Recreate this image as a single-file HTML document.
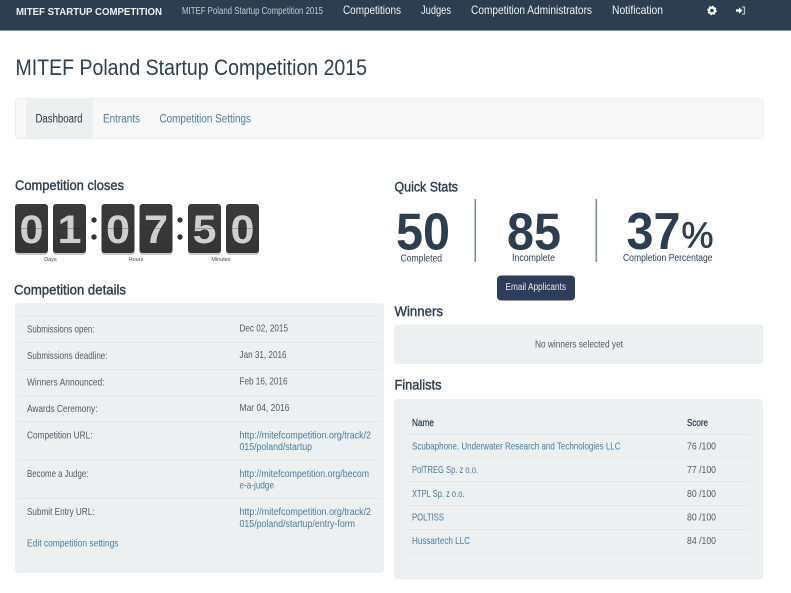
<!DOCTYPE html>
<html lang="en">
<head>
<meta charset="utf-8">
<title>MITEF Poland Startup Competition 2015</title>
<style>
html,body{margin:0;padding:0;background:#fff;width:791px;height:593px;overflow:hidden}
svg{display:block;filter:blur(.3px)}
text{font-family:"Liberation Sans",Arial,sans-serif;white-space:pre}
.nav{fill:#f0f2f4;font-size:12px}
.lab{fill:#505c68;font-size:10.500px}
.val{fill:#505c68;font-size:10.500px}
.lnk{fill:#4a7ba0;font-size:10.500px}
.h{fill:#2c3e50;font-size:14px;stroke:#2c3e50;stroke-width:.4}
.dig{fill:#cfcfcf;font-size:40px;font-weight:bold;text-anchor:middle}
.cl{fill:#444;font-size:5.500px;text-anchor:middle}
.big{fill:#2c3e50;font-size:52px;font-weight:bold}
.st{fill:#2c3e50;font-size:10px}
.ln{stroke:#e3e7e8;stroke-width:1}
</style>
</head>
<body>
<svg width="791" height="593" viewBox="0 0 791 593" xmlns="http://www.w3.org/2000/svg">
<defs>
<linearGradient id="c" x1="0" y1="0" x2="0" y2="1">
<stop offset="0" stop-color="#3a3a3a"/><stop offset="1" stop-color="#343434"/>
</linearGradient>
<g id="card"><rect x="0" y="1" width="33" height="50" rx="3" fill="#c9c9c9"/><rect x="0" y="0" width="33" height="49" rx="3" fill="url(#c)"/></g>
</defs>

<!-- nav -->
<rect width="791" height="30" fill="#2c3e50"/>
<rect y="30" width="791" height="1" fill="#8d99a4"/>
<text x="16" y="15" font-size="10" font-weight="bold" fill="#eef0f2" textLength="146" lengthAdjust="spacingAndGlyphs">MITEF STARTUP COMPETITION</text>
<text x="182" y="14" font-size="10" fill="#c3cbd2" textLength="141" lengthAdjust="spacingAndGlyphs">MITEF Poland Startup Competition 2015</text>
<text class="nav" x="343" y="14" textLength="58" lengthAdjust="spacingAndGlyphs">Competitions</text>
<text class="nav" x="421" y="14" textLength="30" lengthAdjust="spacingAndGlyphs">Judges</text>
<text class="nav" x="471" y="14" textLength="121" lengthAdjust="spacingAndGlyphs">Competition Administrators</text>
<text class="nav" x="612" y="14" textLength="51" lengthAdjust="spacingAndGlyphs">Notification</text>
<!-- gear -->
<circle cx="712" cy="10.500" r="2.900" fill="none" stroke="#fff" stroke-width="2.200"/>
<circle cx="712" cy="10.500" r="4.200" fill="none" stroke="#fff" stroke-width="1.200" stroke-dasharray="1.700 1.600"/>
<!-- sign in -->
<path d="M736 9.300h3V7.200l3.400 3.300-3.400 3.300v-2.100h-3z" fill="#fff"/>
<path d="M742 7h2.400v7H742" fill="none" stroke="#cfd6dc" stroke-width="1"/>

<!-- title -->
<text x="15.500" y="75" font-size="22" fill="#2c3e50" textLength="351.500" lengthAdjust="spacingAndGlyphs">MITEF Poland Startup Competition 2015</text>

<!-- tabs -->
<rect x="15.500" y="98.500" width="747.500" height="40" rx="3" fill="#f8f8f8" stroke="#eceeee"/>
<rect x="26" y="99" width="67" height="39" fill="#ecf0f1"/>
<text x="35.500" y="122.500" font-size="11.500" fill="#333" textLength="47" lengthAdjust="spacingAndGlyphs">Dashboard</text>
<text x="103" y="122.500" font-size="11.500" fill="#4a7ba0" textLength="37" lengthAdjust="spacingAndGlyphs">Entrants</text>
<text x="159.500" y="122.500" font-size="11.500" fill="#4a7ba0" textLength="91.500" lengthAdjust="spacingAndGlyphs">Competition Settings</text>

<!-- clock -->
<text class="h" x="15" y="190" textLength="109" lengthAdjust="spacingAndGlyphs">Competition closes</text>
<use href="#card" x="15" y="204"/><use href="#card" x="53" y="204"/>
<use href="#card" x="101.500" y="204"/><use href="#card" x="139.500" y="204"/>
<use href="#card" x="188" y="204"/><use href="#card" x="226" y="204"/>
<text class="dig" x="31.500" y="243" textLength="24" lengthAdjust="spacingAndGlyphs">0</text>
<text class="dig" x="69.500" y="243" textLength="24" lengthAdjust="spacingAndGlyphs">1</text>
<text class="dig" x="118" y="243" textLength="24" lengthAdjust="spacingAndGlyphs">0</text>
<text class="dig" x="156" y="243" textLength="24" lengthAdjust="spacingAndGlyphs">7</text>
<text class="dig" x="204.500" y="243" textLength="24" lengthAdjust="spacingAndGlyphs">5</text>
<text class="dig" x="242.500" y="243" textLength="24" lengthAdjust="spacingAndGlyphs">0</text>
<path d="M15 228.500h33M53 228.500h33M101.500 228.500h33M139.500 228.500h33M188 228.500h33M226 228.500h33" stroke="#222" stroke-width=".6" opacity=".55"/>
<circle cx="94" cy="220" r="2.700" fill="#333"/><circle cx="94" cy="237" r="2.700" fill="#333"/>
<circle cx="180" cy="220" r="2.700" fill="#333"/><circle cx="180" cy="237" r="2.700" fill="#333"/>
<text class="cl" x="50.500" y="261">Days</text>
<text class="cl" x="136" y="261">Hours</text>
<text class="cl" x="221" y="261">Minutes</text>

<!-- details -->
<text class="h" x="14" y="294.500" textLength="112" lengthAdjust="spacingAndGlyphs">Competition details</text>
<rect x="15" y="303" width="369" height="270" rx="3" fill="#ecf0f1"/>
<path class="ln" d="M17 316.500h364M17 342.500h364M17 369.500h364M17 395.500h364M17 421.500h364M17 459.500h364M17 498.500h364"/>
<text class="lab" x="27" y="332.500" textLength="67.500" lengthAdjust="spacingAndGlyphs">Submissions open:</text>
<text class="lab" x="27" y="359" textLength="80.500" lengthAdjust="spacingAndGlyphs">Submissions deadline:</text>
<text class="lab" x="27" y="385.500" textLength="77.500" lengthAdjust="spacingAndGlyphs">Winners Announced:</text>
<text class="lab" x="27" y="412" textLength="70.500" lengthAdjust="spacingAndGlyphs">Awards Ceremony:</text>
<text class="lab" x="27" y="438.500" textLength="65.500" lengthAdjust="spacingAndGlyphs">Competition URL:</text>
<text class="lab" x="27" y="477" textLength="61.500" lengthAdjust="spacingAndGlyphs">Become a Judge:</text>
<text class="lab" x="27" y="515" textLength="67.500" lengthAdjust="spacingAndGlyphs">Submit Entry URL:</text>
<text class="lnk" x="27" y="546.500" textLength="91.500" lengthAdjust="spacingAndGlyphs">Edit competition settings</text>
<text class="val" x="239.500" y="331.500" textLength="48.500" lengthAdjust="spacingAndGlyphs">Dec 02, 2015</text>
<text class="val" x="239.500" y="358" textLength="47" lengthAdjust="spacingAndGlyphs">Jan 31, 2016</text>
<text class="val" x="239.500" y="384.500" textLength="48" lengthAdjust="spacingAndGlyphs">Feb 16, 2016</text>
<text class="val" x="239.500" y="411" textLength="50" lengthAdjust="spacingAndGlyphs">Mar 04, 2016</text>
<text class="lnk" x="239.500" y="438.500" textLength="131.500" lengthAdjust="spacingAndGlyphs">http://mitefcompetition.org/track/2</text>
<text class="lnk" x="239.500" y="450" textLength="72.500" lengthAdjust="spacingAndGlyphs">015/poland/startup</text>
<text class="lnk" x="239.500" y="477" textLength="129.500" lengthAdjust="spacingAndGlyphs">http://mitefcompetition.org/becom</text>
<text class="lnk" x="239.500" y="488.500" textLength="34.500" lengthAdjust="spacingAndGlyphs">e-a-judge</text>
<text class="lnk" x="239.500" y="515" textLength="131.500" lengthAdjust="spacingAndGlyphs">http://mitefcompetition.org/track/2</text>
<text class="lnk" x="239.500" y="527" textLength="115.500" lengthAdjust="spacingAndGlyphs">015/poland/startup/entry-form</text>

<!-- stats -->
<text class="h" x="394.500" y="191.500" textLength="63.500" lengthAdjust="spacingAndGlyphs">Quick Stats</text>
<text class="big" x="396" y="249.500" textLength="54" lengthAdjust="spacingAndGlyphs">50</text>
<text class="big" x="507" y="249.500" textLength="54" lengthAdjust="spacingAndGlyphs">85</text>
<text class="big" x="626.500" y="249" textLength="54" lengthAdjust="spacingAndGlyphs">37</text>
<text x="681.500" y="247.500" font-size="36" fill="#2c3e50" stroke="#2c3e50" stroke-width=".6" textLength="32" lengthAdjust="spacingAndGlyphs">%</text>
<text class="st" x="400.500" y="261.500" textLength="41.500" lengthAdjust="spacingAndGlyphs">Completed</text>
<text class="st" x="512" y="261" textLength="43" lengthAdjust="spacingAndGlyphs">Incomplete</text>
<text class="st" x="623" y="261" textLength="89.500" lengthAdjust="spacingAndGlyphs">Completion Percentage</text>
<rect x="474.500" y="199" width="1.600" height="63" fill="#858b90"/>
<rect x="595.500" y="199" width="1.600" height="63" fill="#858b90"/>
<rect x="497" y="275.500" width="78" height="25" rx="4" fill="#2f3c5a"/>
<text x="505.500" y="290" font-size="10" fill="#e8eaee" textLength="60.500" lengthAdjust="spacingAndGlyphs">Email Applicants</text>

<!-- winners -->
<text class="h" x="394.500" y="316" textLength="48.500" lengthAdjust="spacingAndGlyphs">Winners</text>
<rect x="394" y="325" width="369" height="39" rx="3" fill="#ecf0f1"/>
<text class="val" x="535" y="347.500" textLength="88" lengthAdjust="spacingAndGlyphs">No winners selected yet</text>

<!-- finalists -->
<text class="h" x="394.500" y="389.500" textLength="47" lengthAdjust="spacingAndGlyphs">Finalists</text>
<rect x="394" y="399" width="369" height="180" rx="3" fill="#ecf0f1"/>
<text x="412" y="426" font-size="10" fill="#2c3e50" stroke="#2c3e50" stroke-width=".25" textLength="22" lengthAdjust="spacingAndGlyphs">Name</text>
<text x="687" y="426" font-size="10" fill="#2c3e50" stroke="#2c3e50" stroke-width=".25" textLength="21" lengthAdjust="spacingAndGlyphs">Score</text>
<path class="ln" d="M407 434.500h344M407 458h344M407 481.500h344M407 505.500h344M407 529.500h344M407 553h344"/>
<text class="lnk" x="412" y="449.500" textLength="208.500" lengthAdjust="spacingAndGlyphs">Scubaphone. Underwater Research and Technologies LLC</text>
<text class="lnk" x="412" y="473" textLength="66" lengthAdjust="spacingAndGlyphs">PolTREG Sp. z o.o.</text>
<text class="lnk" x="412" y="497" textLength="52.500" lengthAdjust="spacingAndGlyphs">XTPL Sp. z o.o.</text>
<text class="lnk" x="412" y="520.500" textLength="32" lengthAdjust="spacingAndGlyphs">POLTISS</text>
<text class="lnk" x="412" y="544" textLength="58" lengthAdjust="spacingAndGlyphs">Hussartech LLC</text>
<text class="val" x="687" y="449.500" textLength="29" lengthAdjust="spacingAndGlyphs">76 /100</text>
<text class="val" x="687" y="473" textLength="29" lengthAdjust="spacingAndGlyphs">77 /100</text>
<text class="val" x="687" y="497" textLength="29" lengthAdjust="spacingAndGlyphs">80 /100</text>
<text class="val" x="687" y="520.500" textLength="29" lengthAdjust="spacingAndGlyphs">80 /100</text>
<text class="val" x="687" y="544" textLength="29" lengthAdjust="spacingAndGlyphs">84 /100</text>
</svg>
</body>
</html>
